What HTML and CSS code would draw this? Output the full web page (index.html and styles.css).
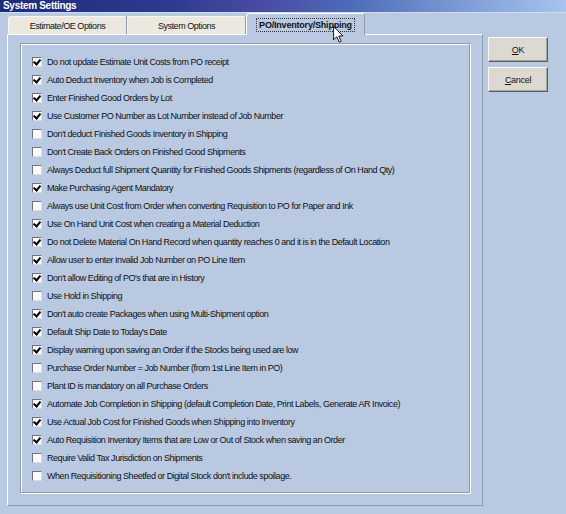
FILE: index.html
```html
<!DOCTYPE html>
<html>
<head>
<meta charset="utf-8">
<title>System Settings</title>
<link rel="stylesheet" href="styles.css">
</head>
<body>
<div class="window">
  <div class="titlebar">System Settings</div>
  <div class="content">
    <div class="tabs-area">
      <div class="tabstrip">
        <div class="tab">Estimate/OE Options</div>
        <div class="tab">System Options</div>
        <div class="tab selected"><span class="focus">PO/Inventory/Shipping</span></div>
      </div>
      <div class="panel">
        <div class="group">
          <div class="row"><span class="cb on"></span>Do not update Estimate Unit Costs from PO receipt</div>
          <div class="row"><span class="cb on"></span>Auto Deduct Inventory when Job is Completed</div>
          <div class="row"><span class="cb on"></span>Enter Finished Good Orders by Lot</div>
          <div class="row"><span class="cb on"></span>Use Customer PO Number as Lot Number instead of Job Number</div>
          <div class="row"><span class="cb"></span>Don't deduct Finished Goods Inventory in Shipping</div>
          <div class="row"><span class="cb"></span>Don't Create Back Orders on Finished Good Shipments</div>
          <div class="row"><span class="cb"></span>Always Deduct full Shipment Quantity for Finished Goods Shipments (regardless of On Hand Qty)</div>
          <div class="row"><span class="cb on"></span>Make Purchasing Agent Mandatory</div>
          <div class="row"><span class="cb"></span>Always use Unit Cost from Order when converting Requisition to PO for Paper and Ink</div>
          <div class="row"><span class="cb on"></span>Use On Hand Unit Cost when creating a Material Deduction</div>
          <div class="row"><span class="cb on"></span>Do not Delete Material On Hand Record when quantity reaches 0 and it is in the Default Location</div>
          <div class="row"><span class="cb on"></span>Allow user to enter Invalid Job Number on PO Line Item</div>
          <div class="row"><span class="cb on"></span>Don't allow Editing of PO's that are in History</div>
          <div class="row"><span class="cb"></span>Use Hold in Shipping</div>
          <div class="row"><span class="cb on"></span>Don't auto create Packages when using Multi-Shipment option</div>
          <div class="row"><span class="cb on"></span>Default Ship Date to Today's Date</div>
          <div class="row"><span class="cb on"></span>Display warning upon saving an Order if the Stocks being used are low</div>
          <div class="row"><span class="cb"></span>Purchase Order Number = Job Number (from 1st Line Item in PO)</div>
          <div class="row"><span class="cb"></span>Plant ID is mandatory on all Purchase Orders</div>
          <div class="row"><span class="cb on"></span>Automate Job Completion in Shipping (default Completion Date, Print Labels, Generate AR Invoice)</div>
          <div class="row"><span class="cb on"></span>Use Actual Job Cost for Finished Goods when Shipping into Inventory</div>
          <div class="row"><span class="cb on"></span>Auto Requisition Inventory Items that are Low or Out of Stock when saving an Order</div>
          <div class="row"><span class="cb"></span>Require Valid Tax Jurisdiction on Shipments</div>
          <div class="row"><span class="cb"></span>When Requisitioning Sheetfed or Digital Stock don't include spoilage.</div>
        </div>
      </div>
    </div>
    <div class="buttons">
      <button class="btn"><u>O</u>K</button>
      <button class="btn"><u>C</u>ancel</button>
    </div>
  </div>
  <svg class="cursor" width="11" height="17" viewBox="0 0 12 19">
    <path d="M0.5 0.5 L0.5 15.5 L4 12 L6.8 18 L9 17 L6.3 11.2 L11 11.2 Z" fill="#fff" stroke="#000" stroke-width="1" stroke-linejoin="miter"/>
  </svg>
</div>
</body>
</html>
```

FILE: styles.css
```css
html, body {
  margin: 0;
  padding: 0;
}
body {
  width: 566px;
  height: 514px;
  overflow: hidden;
  background: #b8c9e1;
  font-family: "Liberation Sans", Arial, sans-serif;
  font-size: 9px;
  letter-spacing: -0.45px;
  color: #111;
}
.window {
  position: relative;
  width: 566px;
  height: 514px;
  background: #b8c9e1;
}
.titlebar {
  height: 12px;
  line-height: 12px;
  padding-left: 3px;
  color: #fff;
  font-weight: bold;
  font-size: 10px;
  letter-spacing: -0.3px;
  background: linear-gradient(90deg, #1e2a7a 0%, #2d3a90 30%, #4a4fa4 48%, #4d6cb8 62%, #7393d0 78%, #a6c4ee 100%);
  border-bottom: 1px solid #d2deef;
}
.content {
  display: flex;
  align-items: flex-start;
}
.tabs-area {
  margin-left: 7px;
  width: 476px;
}
.tabstrip {
  display: flex;
  align-items: flex-end;
  height: 21px;
  padding-left: 1px;
  position: relative;
  z-index: 1;
}
.tab {
  box-sizing: border-box;
  width: 119px;
  height: 18px;
  margin-bottom: 0;
  background: #ebe8df;
  border: 1px solid #f4f6f8;
  border-right-color: #8e99a8;
  border-bottom: none;
  border-radius: 3px 3px 0 0;
  display: flex;
  align-items: center;
  justify-content: center;
  color: #111;
}
.tab.selected {
  height: 22px;
  margin-bottom: -1px;
  background: #b8c9e1;
  border-color: #ffffff;
  border-right-color: #8e99a8;
  font-weight: bold;
  letter-spacing: -0.2px;
}
.focus {
  outline: 1px dotted #333;
  outline-offset: 1px;
  padding: 0 1px;
  margin-top: 1px;
}
.panel {
  box-sizing: border-box;
  height: 472px;
  border-top: 1px solid #ffffff;
  border-left: 1px solid #ffffff;
  border-right: 1px solid #8e99a8;
  border-bottom: 1px solid #8e99a8;
  padding: 8px 12px 12px 12px;
}
.group {
  box-sizing: border-box;
  height: 450px;
  border: 1px solid #8e99a8;
  box-shadow: 1px 1px 0 #ffffff, inset 1px 1px 0 #ffffff;
  padding: 9px 0 0 11px;
}
.row {
  height: 18px;
  display: flex;
  align-items: center;
  white-space: nowrap;
}
.cb {
  box-sizing: border-box;
  width: 10px;
  height: 10px;
  margin-right: 5px;
  background: #fbfbfb;
  border: 1px solid #6f7680;
  border-right-color: #dcdcdc;
  border-bottom-color: #dcdcdc;
  position: relative;
  flex: none;
}
.cb.on::after {
  content: "";
  position: absolute;
  left: 1px;
  top: 0px;
  width: 3px;
  height: 5px;
  border-right: 2px solid #000;
  border-bottom: 2px solid #000;
  transform: rotate(40deg);
  transform-origin: 60% 60%;
}
.buttons {
  display: flex;
  flex-direction: column;
  gap: 5px;
  margin-left: 5px;
  margin-top: 24px;
}
.btn {
  box-sizing: border-box;
  width: 60px;
  height: 25px;
  background: #dcd9d1;
  border: 1px solid #f8f8f8;
  border-right-color: #5e5e5e;
  border-bottom-color: #5e5e5e;
  box-shadow: inset -1px -1px 0 #a6a49e;
  font-family: "Liberation Sans", Arial, sans-serif;
  font-size: 9px;
  letter-spacing: -0.3px;
  color: #111;
  padding: 0;
}
.cursor {
  position: absolute;
  left: 333px;
  top: 26px;
  z-index: 5;
}
```
